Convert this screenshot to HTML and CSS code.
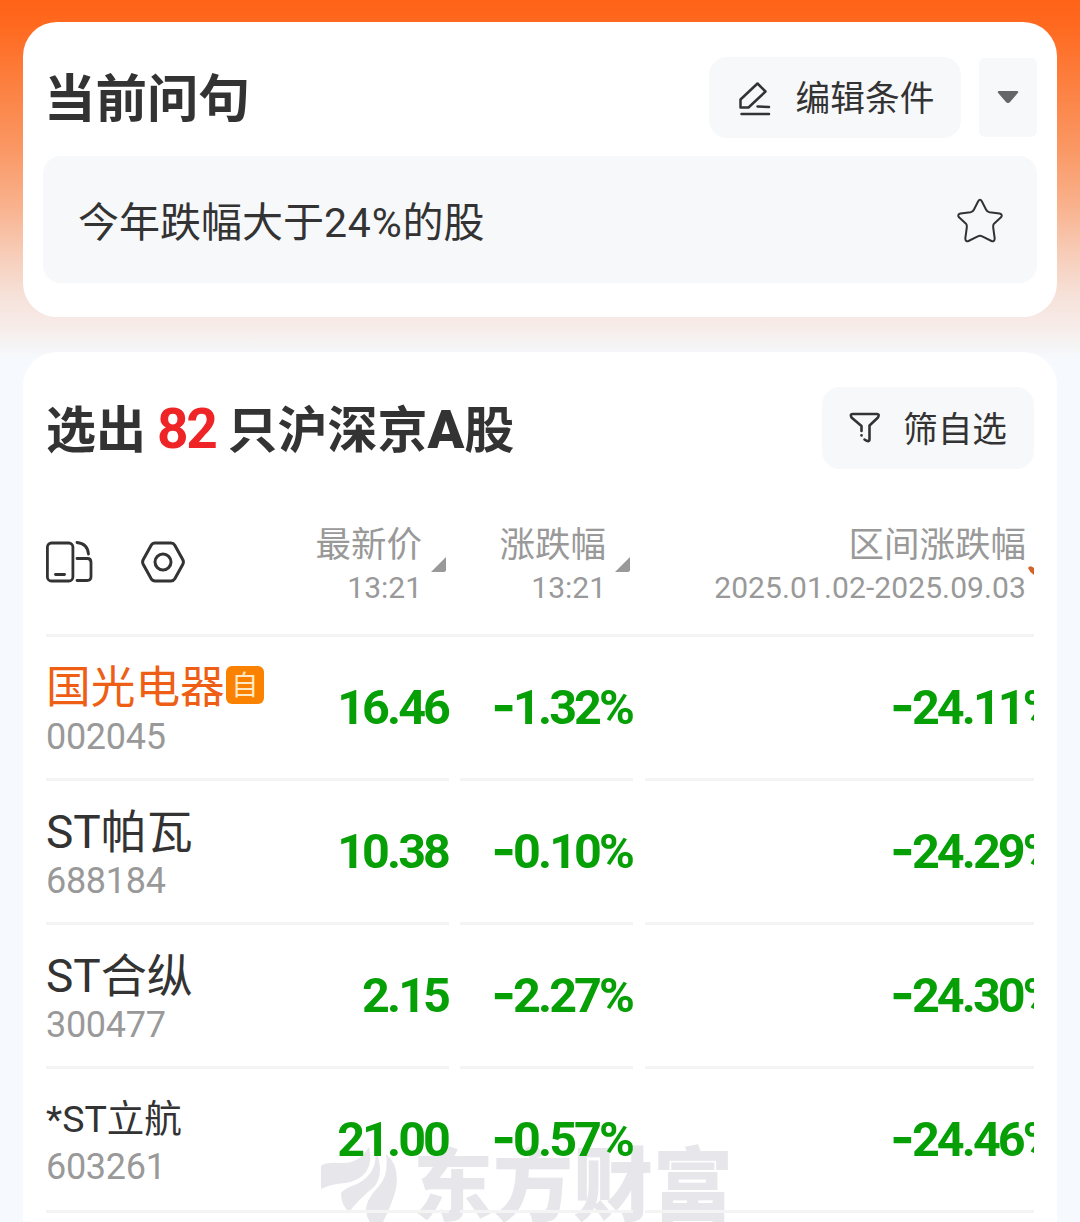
FILE: index.html
```html
<!DOCTYPE html>
<html lang="zh-CN">
<head>
    <meta charset="UTF-8">
    <meta name="viewport" content="width=device-width, initial-scale=1.0">
    <title>条件选股</title>
    <link rel="stylesheet" href="styles.css">
</head>
<body>
    <section class="card query-card">
        <div class="card-head">
            <h2>当前问句</h2>
            <button class="btn edit-btn">
                <svg width="34" height="36" viewBox="0 0 34 36" fill="none" stroke="#333" stroke-width="2.5" stroke-linecap="round" stroke-linejoin="round">
                    <path d="M19.5 3.5L27.5 11.5L10.5 27.5H2.5V19.5Z"/>
                    <path d="M19.5 26.5L31 27"/>
                    <path d="M3.5 34H31"/>
                </svg>
                <span>编辑条件</span>
            </button>
            <button class="btn more-btn">
                <svg width="22" height="13" viewBox="0 0 22 13" fill="#666"><path d="M2 0H20Q22 0.3 20.8 2L13.5 10.6Q11 13.6 8.5 10.6L1.2 2Q0 0.3 2 0Z"/></svg>
            </button>
        </div>
        <div class="query">
            <span>今年跌幅大于<span class="num">24%</span>的股</span>
            <svg width="48" height="48" viewBox="0 0 48 48" fill="none" stroke="#333" stroke-width="2" stroke-linejoin="round">
                <path d="M22.2 4.2Q24 1.2 25.8 4.2L30 12.5Q31 14.8 33.500 15.200L43.500 16.500Q47.200 17.600 45 20.300L38 26.700Q36.800 28.200 37.200 30.500L38.700 41.500Q38.500 45 35.500 44L26.200 39.400Q24 38.200 21.800 39.400L12.500 44Q9.500 45 9.300 41.500L10.800 30.500Q11.200 28.200 10 26.700L3 20.300Q0.800 17.600 4.500 16.500L14.500 15.200Q17 14.800 18 12.500Z"/>
            </svg>
        </div>
    </section>

    <section class="card result-card">
        <div class="card-head">
            <h2>选出<em>82</em>只沪深京<b>A</b>股</h2>
            <button class="btn filter-btn">
                <svg width="32" height="32" viewBox="0 0 32 32" fill="none" stroke="#333" stroke-width="2.6" stroke-linecap="round" stroke-linejoin="round">
                    <path d="M12.500 19V14L2.500 5.500Q0.800 2 3.500 2H28Q30.800 2 29 5.500L20.500 13.500V27Q20.500 31 15.500 27.500"/>
                    <path d="M12.500 23.300V23.400"/>
                </svg>
                <span>筛自选</span>
            </button>
        </div>

        <div class="table">
            <div class="row head-row">
                <div class="cell">
                    <div class="tools">
                        <svg width="47" height="42" viewBox="0 0 47 42" fill="none" stroke="#333" stroke-width="2.8" stroke-linecap="round">
                            <rect x="1.400" y="2" width="25.500" height="38" rx="4"/>
                            <path d="M9.500 33.500H18.500"/>
                            <path d="M31 1.500Q41.500 2.500 42.500 13"/>
                            <path d="M31 17.500H41.500Q45 17.500 45 21.500V35.500Q45 39.500 41 39.500H31"/>
                        </svg>
                        <svg width="44" height="42" viewBox="0 0 44 42" fill="none" stroke="#333" stroke-width="3" stroke-linejoin="round">
                            <path d="M14 2H30Q32.500 2 33.800 4.200L41.700 18.500Q43.100 21 41.700 23.500L33.800 37.800Q32.500 40 30 40H14Q11.500 40 10.200 37.800L2.300 23.500Q0.900 21 2.300 18.500L10.200 4.200Q11.500 2 14 2Z"/>
                            <circle cx="22" cy="21" r="8"/>
                        </svg>
                    </div>
                    <div class="col-title">
                        <p>最新价<small>13:21</small></p>
                        <svg class="sort" width="15" height="15" viewBox="0 0 15 15"><path d="M15 0V13.500L13.500 15H0Z"/></svg>
                    </div>
                </div>
                <div class="cell">
                    <div class="col-title">
                        <p>涨跌幅<small>13:21</small></p>
                        <svg class="sort" width="15" height="15" viewBox="0 0 15 15"><path d="M15 0V13.500L13.500 15H0Z"/></svg>
                    </div>
                </div>
                <div class="cell range">
                    <div class="col-title">
                        <p>区间涨跌幅<small>2025.01.02-2025.09.03</small></p>
                        <svg class="sort-active" width="6" height="10" viewBox="0 0 6 10"><path d="M0 3Q2 -0.500 6 3V10Q1.500 7 0 3Z"/></svg>
                    </div>
                </div>
            </div>

            <div class="row">
                <div class="cell">
                    <div class="stock self">
                        <div class="name">国光电器<i>自</i></div>
                        <div class="code">002045</div>
                    </div>
                    <span class="value">16.46</span>
                </div>
                <div class="cell"><span class="value"><span class="sign">-</span>1.32%</span></div>
                <div class="cell range"><span class="value"><span class="sign">-</span>24.11%</span></div>
            </div>
            <div class="row">
                <div class="cell">
                    <div class="stock">
                        <div class="name">ST帕瓦</div>
                        <div class="code">688184</div>
                    </div>
                    <span class="value">10.38</span>
                </div>
                <div class="cell"><span class="value"><span class="sign">-</span>0.10%</span></div>
                <div class="cell range"><span class="value"><span class="sign">-</span>24.29%</span></div>
            </div>
            <div class="row">
                <div class="cell">
                    <div class="stock">
                        <div class="name">ST合纵</div>
                        <div class="code">300477</div>
                    </div>
                    <span class="value">2.15</span>
                </div>
                <div class="cell"><span class="value"><span class="sign">-</span>2.27%</span></div>
                <div class="cell range"><span class="value"><span class="sign">-</span>24.30%</span></div>
            </div>
            <div class="row">
                <div class="cell">
                    <div class="stock long">
                        <div class="name">*ST立航</div>
                        <div class="code">603261</div>
                    </div>
                    <span class="value">21.00</span>
                </div>
                <div class="cell"><span class="value"><span class="sign">-</span>0.57%</span></div>
                <div class="cell range"><span class="value"><span class="sign">-</span>24.46%</span></div>
            </div>
        </div>

        <!-- watermark under the table text -->
        <div class="watermark">
            <svg width="78" height="80" viewBox="0 0 78 80" fill="#e6e6eb">
                <path d="M0 21Q4 17 20 18Q38 19 48 2Q52 16 45 27Q38 36 24 38Q10 39 0 44Z"/>
                <path d="M54 3Q64 26 54 41Q38 54 28 67Q20 60 20 48Q24 43 36 39Q58 28 54 3Z"/>
                <path d="M65 9Q79 20 75 44Q70 62 61 79H50Q42 68 47 56Q51 48 58 41Q68 30 65 9Z"/>
            </svg>
            <span>东方财富</span>
        </div>
    </section>
</body>
</html>
```

FILE: styles.css
```css
* {
    box-sizing: border-box;
}

body {
    margin: 0;
    height: 1222px;
    padding: 22px 23px 0;
    overflow: hidden;
    font-family: Roboto, "Noto Sans CJK SC", sans-serif;
    color: #333;
    background: #f6faff linear-gradient(#ff6317 0, #ff691f 25px, #fc8040 85px, #fa9865 150px, #f9b18c 205px, #f7cdb9 255px, #f6e3dc 300px, #f7ebe8 325px, #f5f4f4 345px, #f6faff 362px) no-repeat;
}

h2, p {
    margin: 0;
}

svg {
    display: block;
    flex: none;
}

.card {
    background: #fff;
    border-radius: 34px;
}

.card-head {
    display: flex;
    align-items: center;
    height: 81px;
}

.card-head h2 {
    margin-right: auto;
    padding: 5px 0 0 1px;
    font-size: 51.5px;
    line-height: 80px;
    white-space: nowrap;
}

.btn {
    display: flex;
    align-items: center;
    justify-content: center;
    height: 81px;
    padding: 0;
    border: none;
    border-radius: 18px;
    background: #f7f8fa;
    font: 34.7px/50px Roboto, "Noto Sans CJK SC", sans-serif;
    color: #333;
}

.btn span {
    padding-top: 3px;
}

/* current question */
.query-card {
    height: 295px;
    padding: 35px 20px 0;
}

.edit-btn {
    width: 252px;
    padding-left: 2px;
    gap: 24px;
}

.more-btn {
    width: 58px;
    height: 79px;
    margin-left: 18px;
    border-radius: 6px;
}

.query {
    display: flex;
    align-items: center;
    justify-content: space-between;
    height: 127px;
    margin-top: 18px;
    padding: 0 33px 0 35px;
    border-radius: 18px;
    background: #f7f8fa;
    font-size: 41px;
}

.query > span {
    padding-bottom: 2px;
}

.query svg {
    margin-top: 3px;
}

.query .num {
    letter-spacing: 0.8px;
}

/* result list */
.result-card {
    position: relative;
    z-index: 0;
    height: 900px;
    margin-top: 35px;
    padding: 35px 23px 0;
}

.result-card .card-head {
    height: 82px;
}

.result-card h2 {
    padding: 3px 0 0;
    font-size: 50px;
}

.result-card h2 em {
    margin: 0 12px 0 11px;
    font-size: 55px;
    font-style: normal;
    letter-spacing: -2.3px;
    color: #ef2427;
}

.result-card h2 b {
    font-size: 54px;
}

.filter-btn {
    width: 212px;
    height: 82px;
    gap: 22px;
}

.row {
    display: grid;
    grid-template-columns: 403px 173px 1fr;
    gap: 11px;
    height: 144px;
}

.cell {
    display: flex;
    align-items: center;
    justify-content: flex-end;
    min-width: 0;
    border-bottom: 3px solid #f4f4f5;
}

.head-row {
    height: 168px;
    border-bottom: 3px solid #f4f4f5;
}

.head-row .cell {
    border: none;
    padding-top: 21px;
}

.tools {
    display: flex;
    gap: 48px;
    margin-right: auto;
}

.col-title {
    display: flex;
    align-items: center;
    gap: 9px;
    margin-right: 3px;
    font-size: 35.5px;
    line-height: 44px;
    text-align: right;
    white-space: nowrap;
    color: #999;
}

.col-title p {
    padding-top: 8px;
}

.col-title small {
    display: block;
    font-size: 30px;
    line-height: 42px;
}

.sort {
    margin-top: 5px;
    fill: #999;
}

.range .col-title {
    gap: 2px;
    margin: 0 0 0 auto;
}

.range small {
    letter-spacing: 0.1px;
}

.sort-active {
    margin-top: 16px;
    fill: #d4632a;
}

.stock {
    margin-right: auto;
    padding-top: 2px;
}

.name {
    display: flex;
    align-items: center;
    height: 53px;
    font-size: 46px;
    white-space: nowrap;
}

.self .name {
    font-size: 44.7px;
    color: #ee5f15;
}

.long .name {
    height: 48px;
    font-size: 37.5px;
}

.name i {
    width: 38px;
    height: 38px;
    margin: 2px 0 0 1px;
    border-radius: 6px;
    background: #fb8200;
    font-size: 27px;
    font-style: normal;
    line-height: 40px;
    text-align: center;
    color: #ffe9c4;
}

.code {
    padding-top: 4px;
    font-size: 36px;
    line-height: 46px;
    letter-spacing: -0.3px;
    color: #999;
}

.value {
    flex: none;
    margin-right: 1px;
    font-size: 48.5px;
    font-weight: bold;
    line-height: 56px;
    letter-spacing: -2.9px;
    white-space: nowrap;
    color: #069f06;
}

/* wider minus */
.sign {
    font-family: Inter, sans-serif;
    font-size: 53px;
    line-height: 0;
}

.range {
    justify-content: flex-start;
    margin-left: 1px;
    overflow: hidden;
}

.range .value {
    margin-left: 245px;
}

.watermark {
    position: absolute;
    z-index: -1;
    left: 298px;
    top: 791px;
    display: flex;
    align-items: center;
    gap: 14px;
    font-size: 80px;
    font-weight: 900;
    line-height: 80px;
    color: #e6e6eb;
}

.watermark span {
    padding-top: 4px;
}
```
